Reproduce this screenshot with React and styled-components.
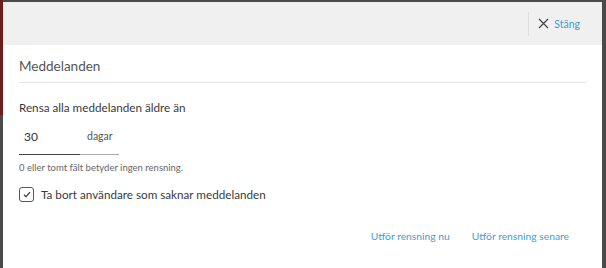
import styled, { createGlobalStyle } from "styled-components";

const GlobalStyle = createGlobalStyle`
  html, body {
    margin: 0;
    padding: 0;
    background: #4a4a4a;
  }
  body {
    font-family: "Lato", "Noto Sans", sans-serif;
  }
`;

function CloseIcon() {
  return (
    <svg width="11" height="11" viewBox="0 0 11 11">
      <path d="M1 1L10 10M10 1L1 10" stroke="#444" strokeWidth="1.2" fill="none" />
    </svg>
  );
}

function CheckIcon() {
  return (
    <svg width="8" height="7" viewBox="0 0 8 7">
      <path d="M1 3.8L3 5.6L7 1.2" stroke="#333" strokeWidth="1.2" fill="none" />
    </svg>
  );
}

export default function App() {
  return (
    <Backdrop>
      <GlobalStyle />
      <Dialog>
        <Header>
          <CloseButton>
            <CloseIcon />
            <span>Stäng</span>
          </CloseButton>
        </Header>
        <Body>
          <Title>Meddelanden</Title>
          <Label>Rensa alla meddelanden äldre än</Label>
          <InputRow>
            <NumberInput defaultValue="30" />
            <Suffix>dagar</Suffix>
          </InputRow>
          <Hint>0 eller tomt fält betyder ingen rensning.</Hint>
          <CheckRow>
            <Box>
              <CheckIcon />
            </Box>
            <span>Ta bort användare som saknar meddelanden</span>
          </CheckRow>
          <Actions>
            <LinkButton>Utför rensning nu</LinkButton>
            <LinkButton>Utför rensning senare</LinkButton>
          </Actions>
        </Body>
      </Dialog>
    </Backdrop>
  );
}

const Backdrop = styled.div`
  width: 606px;
  height: 268px;
  box-sizing: border-box;
  padding: 2px 4px 0 3px;
  background: linear-gradient(#6e1c1c, #6e1c1c) 0 0 / 3px 115px no-repeat, #4a4a4a;
  overflow: hidden;
`;

const Dialog = styled.div`
  background: #fff;
  height: 100%;
  display: flex;
  flex-direction: column;
`;

const Header = styled.div`
  height: 43px;
  background: #f0f0f0;
  display: flex;
  justify-content: flex-end;
  align-items: center;
`;

const CloseButton = styled.button`
  display: flex;
  align-items: center;
  gap: 5px;
  height: 24px;
  margin-right: 22px;
  padding: 0 0 0 9px;
  border: none;
  border-left: 1px solid #dcdcdc;
  background: none;
  font-family: inherit;
  font-size: 10.5px;
  color: #3e9fd0;
  cursor: pointer;
`;

const Body = styled.div`
  padding: 0 16px;
  display: flex;
  flex-direction: column;
`;

const Title = styled.div`
  padding: 11px 0 6px;
  font-size: 13.5px;
  line-height: 20px;
  color: #555;
  border-bottom: 1px solid #e3e3e3;
`;

const Label = styled.div`
  margin-top: 15px;
  font-size: 11.7px;
  line-height: 18px;
  color: #3a3a3a;
`;

const InputRow = styled.div`
  display: flex;
  width: 100px;
  margin-top: 2px;
  height: 36px;
  border-bottom: 1px solid #aaa;
`;

const NumberInput = styled.input`
  width: 61px;
  box-sizing: border-box;
  border: none;
  border-bottom: 1px solid #444;
  margin-bottom: -1px;
  padding: 0 0 0 5px;
  font-family: inherit;
  font-size: 12px;
  color: #333;
  outline: none;
  background: none;
`;

const Suffix = styled.span`
  padding: 10px 0 0 7px;
  font-size: 10.5px;
  line-height: 16px;
  color: #555;
`;

const Hint = styled.div`
  margin-top: 6px;
  font-size: 9.5px;
  line-height: 14px;
  color: #666;
`;

const CheckRow = styled.label`
  display: flex;
  align-items: center;
  gap: 7px;
  margin-top: 11px;
  font-size: 11.7px;
  line-height: 16px;
  color: #3a3a3a;
`;

const Box = styled.span`
  width: 13px;
  height: 13px;
  border: 1px solid #555;
  border-radius: 3px;
  display: flex;
  align-items: center;
  justify-content: center;
`;

const Actions = styled.div`
  display: flex;
  justify-content: flex-end;
  gap: 22px;
  margin-top: 26px;
  padding-right: 17px;
`;

const LinkButton = styled.button`
  border: none;
  background: none;
  padding: 0;
  font-family: inherit;
  font-size: 10.3px;
  line-height: 16px;
  color: #3e9fd0;
  cursor: pointer;
`;
